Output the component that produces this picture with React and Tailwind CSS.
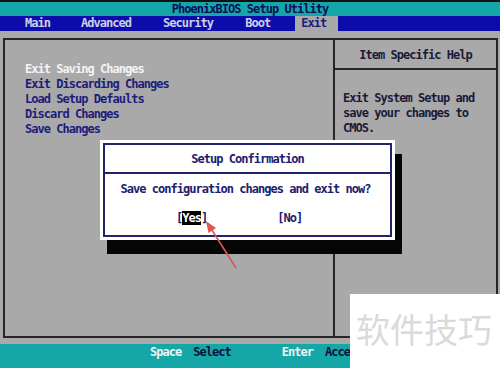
import React from "react";

const mono = "font-['DejaVu_Sans_Mono','Liberation_Mono',monospace] font-bold text-[12px] tracking-[-0.97px] leading-[15px]";

const menu = [
  { label: "Main", ml: "ml-[25px]" },
  { label: "Advanced", ml: "ml-[31px]" },
  { label: "Security", ml: "ml-[32px]" },
  { label: "Boot", ml: "ml-[32px]" },
];

const items = [
  "Exit Saving Changes",
  "Exit Discarding Changes",
  "Load Setup Defaults",
  "Discard Changes",
  "Save Changes",
];

const Dialog = () => (
  <div className="absolute left-[100px] top-[140px] w-[295px] h-[100px]">
    {/* sombra negra */}
    <div className="absolute left-[7px] top-[14px] w-[295px] h-[100px] bg-[#050505]"></div>
    <div className="relative w-full h-full bg-white p-[3px]">
      <div className="w-full h-full border-2 border-[#23236a] flex flex-col text-[#20206e]">
        <div className="h-[29px] border-b-2 border-[#23236a] flex items-center justify-center pt-[1px]">
          Setup Confirmation
        </div>
        <div className="mt-[8px] pr-[4px] text-center">Save configuration changes and exit now?</div>
        <div className="mt-[14px] flex pl-[71px] gap-[70px]">
          <span>
            [<span className="bg-black text-white">Yes</span>]
          </span>
          <span>[No]</span>
        </div>
      </div>
    </div>
  </div>
);

const Arrow = () => (
  <svg className="absolute left-0 top-0 pointer-events-none" width="500" height="368">
    <line x1="236" y1="268" x2="210" y2="227" stroke="#e05555" strokeWidth="1.6" />
    <polygon points="206,221 208.5,233 216,228" fill="#e05555" />
  </svg>
);

export default function App() {
  return (
    <div className={`relative w-[500px] h-[368px] overflow-hidden bg-[#a9a9a9] flex flex-col ${mono}`}>
      <div className="h-[2px] bg-[#111]"></div>
      <div className="h-[14px] bg-[#15a7a7] flex items-center justify-center text-[#0c0c5c]">
        PhoenixBIOS Setup Utility
      </div>
      <div className="h-[15px] bg-[#0c0caa] flex items-center text-[#cdd0e6]">
        {menu.map((m) => (
          <span key={m.label} className={m.ml}>{m.label}</span>
        ))}
        <span className="ml-[25px] h-full w-[43px] bg-[#a9a9a9] text-[#1c1c7c] pl-[6px] flex items-center">Exit</span>
      </div>

      <div className="mt-[7px] ml-[3px] w-[495px] h-[300px] border-2 border-[#262626] flex">
        <div className="w-[330px] border-r-2 border-[#262626] pl-[20px] pt-[22px]">
          {items.map((it, i) => (
            <div key={it} className={i === 0 ? "text-[#f4f4f4]" : "text-[#1c1c7c]"}>{it}</div>
          ))}
        </div>
        <div className="flex-1 flex flex-col">
          <div className="h-[30px] border-b-2 border-[#262626] flex items-center justify-center text-[#1a1a3a] pt-[3px]">
            Item Specific Help
          </div>
          <div className="pl-[8px] pt-[21px] text-[#1a1a3a]">
            <div>Exit System Setup and</div>
            <div>save your changes to</div>
            <div>CMOS.</div>
          </div>
        </div>
      </div>

      <div className="mt-[6px] flex-1 bg-[#15a7a7] flex pt-[1px]">
        <span className="ml-[150px] text-[#eef4f4]">Space</span>
        <span className="ml-[12px] text-[#10103a]">Select</span>
        <span className="ml-[51px] text-[#eef4f4]">Enter</span>
        <span className="ml-[12px] w-[25px] overflow-hidden whitespace-nowrap text-[#10103a]">Accept</span>
      </div>

      <Dialog />
      <Arrow />

      <div className="absolute left-[350px] top-[294px] w-[150px] h-[74px] bg-white flex items-center pl-[6px] pb-[4px]">
        <span className="font-['Noto_Sans_CJK_SC',sans-serif] font-normal tracking-normal text-[34px] leading-none text-[#dadada]">
          软件技巧
        </span>
      </div>
    </div>
  );
}
